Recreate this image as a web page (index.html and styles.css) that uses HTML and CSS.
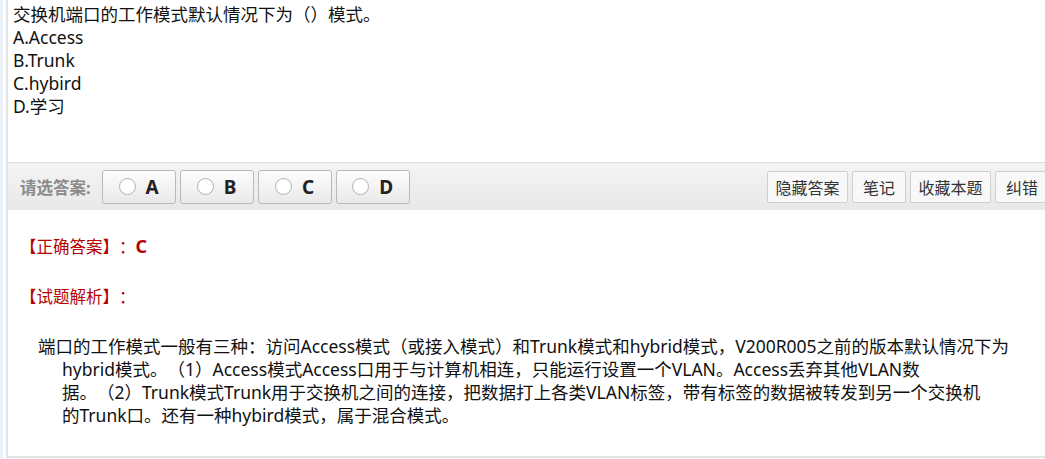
FILE: index.html
```html
<!DOCTYPE html>
<html lang="zh-CN">
<head>
  <meta charset="UTF-8" />
  <title>试题</title>
  <link rel="stylesheet" href="styles.css">
</head>
<body>
  <div class="page">
    <div class="panel">
      <div class="question">
        <p>交换机端口的工作模式默认情况下为（）模式。</p>
        <p>A.Access</p>
        <p>B.Trunk</p>
        <p>C.hybird</p>
        <p>D.学习</p>
      </div>

      <div class="toolbar">
        <div class="choices">
          <span class="choose-label">请选答案:</span>
          <button class="opt"><span class="radio"></span>A</button>
          <button class="opt"><span class="radio"></span>B</button>
          <button class="opt"><span class="radio"></span>C</button>
          <button class="opt"><span class="radio"></span>D</button>
        </div>
        <div class="actions">
          <button class="act wide">隐藏答案</button>
          <button class="act">笔记</button>
          <button class="act wide">收藏本题</button>
          <button class="act">纠错</button>
        </div>
      </div>

      <div class="answer">
        <p class="right-answer"><span class="tag">【正确答案】：</span><strong>C</strong></p>
        <p class="tag analysis-title">【试题解析】：</p>
        <p class="analysis">端口的工作模式一般有三种：访问Access模式（或接入模式）和Trunk模式和hybrid模式，V200R005之前的版本默认情况下为<br>hybrid模式。（1）Access模式Access口用于与计算机相连，只能运行设置一个VLAN。Access丢弃其他VLAN数<br>据。（2）Trunk模式Trunk用于交换机之间的连接，把数据打上各类VLAN标签，带有标签的数据被转发到另一个交换机<br>的Trunk口。还有一种hybird模式，属于混合模式。</p>
      </div>
    </div>
  </div>
</body>
</html>
```

FILE: styles.css
```css
* {
  margin: 0;
  padding: 0;
  box-sizing: border-box;
  font-family: "Noto Sans", "Noto Sans CJK SC", sans-serif;
  text-spacing-trim: space-all;
}
body {
  background-color: #fff;
  overflow: hidden;
  color: #111;
}
.page {
  border-left: 3px solid #eaf1f8;
  padding-left: 3px;
  width: 1060px;
}
.panel {
  border-left: 2px solid #e4e4e4;
  border-bottom: 2px solid #e4e4e4;
  height: 458px;
}
.question {
  padding: 3px 0 0 5px;
  height: 162px;
}
.question p {
  font-size: 17.5px;
  line-height: 23px;
}

.toolbar {
  display: flex;
  justify-content: space-between;
  align-items: center;
  height: 48px;
  border-top: 1px solid #dcdcdc;
  background: linear-gradient(#f4f4f4, #e8e8e8);
  padding: 0 11px 0 12px;
}
.choices, .actions {
  display: flex;
  align-items: center;
}
.choose-label {
  font-size: 16.5px;
  font-weight: bold;
  color: #8a8a8a;
  margin-right: 11px;
}
button {
  cursor: pointer;
}
.opt {
  display: flex;
  align-items: center;
  justify-content: center;
  width: 74px;
  height: 34px;
  margin-right: 4px;
  border: 1px solid #b9b9b9;
  border-radius: 3px;
  background: linear-gradient(#fdfdfd, #e9e9e9);
  font-size: 19px;
  font-weight: bold;
  color: #222;
}
.radio {
  width: 17px;
  height: 17px;
  border-radius: 50%;
  border: 1px solid #b0b0b0;
  background: #fff;
  margin-right: 10px;
}
.act {
  width: 54px;
  height: 32px;
  margin-left: 4px;
  border: 1px solid #cfcfcf;
  border-radius: 2px;
  background: #f8f8f8;
  font-size: 16px;
  color: #333;
}
.act.wide {
  width: 81px;
}

.answer {
  padding: 24px 0 0 12px;
}
.tag {
  color: #b40000;
  font-size: 16.5px;
}
.right-answer {
  line-height: 24px;
}
.right-answer strong {
  color: #b40000;
  font-size: 18px;
}
.analysis-title {
  margin-top: 26px;
  line-height: 24px;
}
.analysis {
  margin-top: 26px;
  padding-left: 42px;
  text-indent: -24px;
  font-size: 17.5px;
  line-height: 23px;
  white-space: nowrap;
}
```
